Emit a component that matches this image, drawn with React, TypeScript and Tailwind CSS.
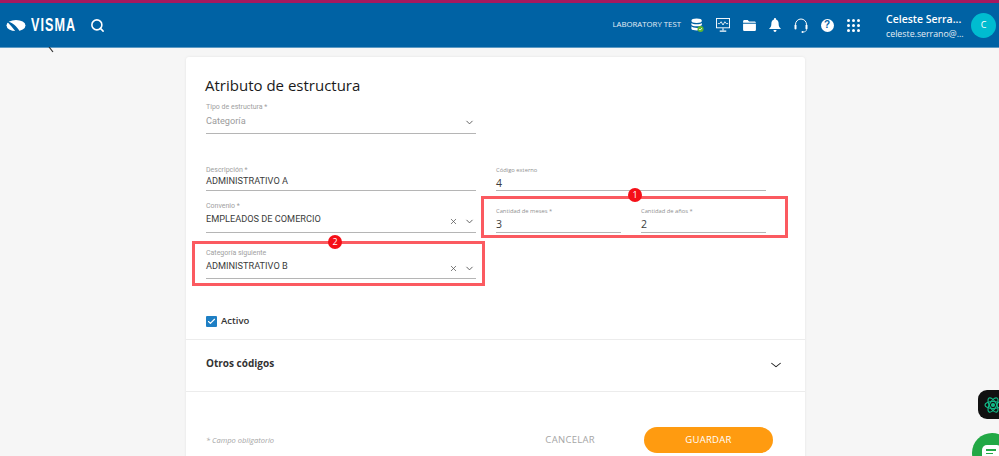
import { Check, ChevronDown, Search, X } from "lucide-react";

function Field({
  label,
  value,
  muted,
  clear,
  arrow,
  alt,
  className = "",
}: {
  label: string;
  value: string;
  muted?: boolean;
  clear?: boolean;
  arrow?: boolean;
  alt?: boolean;
  className?: string;
}) {
  return (
    <div className={`flex flex-col ${className}`}>
      <span className={alt ? "font-['Open_Sans',sans-serif] text-[5.800px] leading-[10px] text-[#8f8f8f]" : "font-['Roboto',sans-serif] text-[7px] leading-[10px] text-[#a0a0a0]"}>{label}</span>
      <div className={`flex min-h-0 flex-1 items-center justify-between ${clear ? "pb-[5px]" : alt ? "pb-0" : "pb-[3px]"}`}>
        <span className={`leading-[12px] ${alt ? "font-['Open_Sans',sans-serif] text-[10.500px]" : "font-['Roboto',sans-serif] text-[9.200px]"} ${muted ? "text-[#9c9c9c]" : "text-[#3c3c3c]"}`}>{value}</span>
        <span className={`flex items-center gap-[6px] pr-[1px] text-[#555] ${clear ? "mt-[5px]" : "mt-[3px]"}`}>
          {clear && <X size={9} strokeWidth={2} />}
          {arrow && <ChevronDown size={11} strokeWidth={2} />}
        </span>
      </div>
      <div className="h-px shrink-0 bg-[#b5b5b5]" />
    </div>
  );
}

function VismaLogo() {
  return (
    <div className="flex items-center gap-[5px]">
      <svg width="20" height="13" viewBox="0 0 20 13">
        <ellipse cx="10" cy="6.500" rx="9.500" ry="5.500" fill="#fff" />
        <path d="M1 2.500 C6 3 11 7 14 13 L10 13 C7 9 4 6 1 2.500Z" fill="#0062a4" />
      </svg>
      <span className="w-[45px] origin-left scale-x-[0.7] font-['Liberation_Sans',sans-serif] text-[18px] leading-none font-bold tracking-[1.5px] whitespace-nowrap text-white">VISMA</span>
    </div>
  );
}

function IconCell({ children }: { children: React.ReactNode }) {
  return <div className="flex w-[26px] items-center justify-center">{children}</div>;
}

function HeaderIcons() {
  return (
    <div className="flex items-center text-white">
      <IconCell>
        {/* base de datos */}
        <svg width="13" height="15" viewBox="0 0 15 17">
          <ellipse cx="6.500" cy="3" rx="6" ry="2.500" fill="#fff" />
          <path d="M.5 5.500c1 2 11 2 12 0V8c-1 2-11 2-12 0zM.5 9.500c1 2 8 2 9 1.500-.5 1-.5 2-.3 3-3 .5-8 0-8.700-1.500z" fill="#fff" />
          <circle cx="11" cy="12.500" r="3.500" fill="#5cb531" />
          <path d="M9.300 12.500l1.300 1.300 2-2.300" stroke="#fff" strokeWidth="1" fill="none" />
        </svg>
      </IconCell>
      <IconCell>
        {/* monitor */}
        <svg width="14" height="14" viewBox="0 0 15 15" fill="none">
          <rect x=".5" y=".5" width="14" height="10" stroke="#fff" />
          <path d="M2 6h2l1.500-2 2 3.500L9.500 4l1.500 2h2" stroke="#fff" strokeWidth=".9" />
          <path d="M7.500 11v2M4 14h7" stroke="#fff" strokeWidth="1.200" />
        </svg>
      </IconCell>
      <IconCell>
        {/* carpeta */}
        <svg width="13" height="11" viewBox="0 0 14 12">
          <path d="M1.500 0H5l1.500 1.500h6c.8 0 1.500.7 1.500 1.500H0v-1.500C0 .7.700 0 1.500 0zM0 4h14v6.500c0 .8-.7 1.500-1.500 1.500h-11C.7 12 0 11.300 0 10.500z" fill="#fff" />
        </svg>
      </IconCell>
      <IconCell>
        {/* campana */}
        <svg width="12" height="14" viewBox="0 0 12 14">
          <path d="M6 0c.5 0 1 .4 1 1v.6c1.700.5 2.600 2 2.600 3.700 0 3 .8 4.200 2.400 5.700H0c1.600-1.500 2.400-2.700 2.400-5.700C2.400 3.600 3.300 2.100 5 1.600V1c0-.6.500-1 1-1zM4.500 12h3c0 1-.7 2-1.500 2s-1.500-1-1.500-2z" fill="#fff" />
        </svg>
      </IconCell>
      <IconCell>
        {/* soporte */}
        <svg width="14" height="15" viewBox="0 0 14 15" fill="none">
          <path d="M1.500 8V6.500a5.500 5.500 0 0 1 11 0V8" stroke="#fff" strokeWidth="1" />
          <rect x="0.500" y="6.500" width="2" height="5" rx="1" fill="#fff" />
          <rect x="11.500" y="6.500" width="2" height="5" rx="1" fill="#fff" />
          <path d="M12.500 11.500c0 1.500-1.500 2.500-3.500 2.500" stroke="#fff" strokeWidth=".8" />
          <circle cx="8.500" cy="14" r="1" fill="#fff" />
        </svg>
      </IconCell>
      <IconCell>
        {/* ayuda */}
        <div className="flex h-[13px] w-[13px] items-center justify-center rounded-full bg-white font-['Liberation_Sans',sans-serif] text-[10px] leading-none font-bold text-[#0062a4]">?</div>
      </IconCell>
      <IconCell>
        {/* apps */}
        <div className="grid grid-cols-3 gap-[2px]">
          {Array.from({ length: 9 }).map((_, i) => (
            <span key={i} className="h-[3px] w-[3px] rounded-full bg-white" />
          ))}
        </div>
      </IconCell>
    </div>
  );
}

export default function App() {
  return (
    <div className="relative h-[456px] w-[999px] overflow-hidden bg-[#f6f6f6] font-['Open_Sans',sans-serif]">
      <header className="flex h-[48px] items-center border-t-[3px] border-b border-t-[#a6195f] border-b-[#5c9ac4] bg-[#0062a4] pr-[3px] pl-[6px]">
        <VismaLogo />
        <Search size={15} strokeWidth={2.500} className="ml-[14px] text-white" />
        <span className="ml-auto text-[7.800px] text-[#e6eef5]">LABORATORY TEST</span>
        <div className="ml-[3px]"><HeaderIcons /></div>
        <div className="mt-[2px] ml-[20px] flex w-[75px] flex-col text-white">
          <span className="text-[10.500px] leading-[15px] font-semibold whitespace-nowrap">Celeste Serra...</span>
          <span className="text-[8.800px] leading-[14px] whitespace-nowrap text-[#e6eef5]">celeste.serrano@...</span>
        </div>
        <div className="ml-[10px] flex h-[25px] w-[25px] items-center justify-center rounded-full bg-[#00bcd0] text-[9px] text-white">C</div>
      </header>

      <main className="mt-[9px] ml-[186px] w-[619px] rounded-t-[3px] bg-white pb-[10px] shadow-[0_0_3px_rgba(0,0,0,0.08)]">
        <div className="pt-[16px] pr-[39px] pl-[20px]">
          <h1 className="-ml-px text-[15px] leading-[24px] text-[#1a1a1a]">Atributo de estructura</h1>
          <Field className="mt-[5px] h-[32px] w-[270px]" label="Tipo de estructura *" value="Categoría" muted arrow />
          <div className="mt-[31px] grid grid-cols-[270px_270px] gap-x-[20px]">
            <Field className="h-[26px]" label="Descripción *" value="ADMINISTRATIVO A" />
            <Field className="h-[26px]" label="Código externo" value="4" alt />
            <Field className="mt-[10px] h-[32px]" label="Convenio *" value="EMPLEADOS DE COMERCIO" clear arrow />
            <div className="mt-[10px] grid grid-cols-[125px_125px] items-end gap-x-[20px]">
              <Field className="h-[27px]" label="Cantidad de meses *" value="3" alt />
              <Field className="h-[27px]" label="Cantidad de años *" value="2" alt />
            </div>
            <Field className="mt-[15px] h-[31px]" label="Categoría siguiente" value="ADMINISTRATIVO B" clear arrow />
          </div>
          <div className="mt-[35px] flex items-center gap-[4px]">
            <span className="flex h-[11px] w-[11px] items-center justify-center rounded-[1px] bg-[#1e7fc4]">
              <Check size={9} strokeWidth={3} className="text-white" />
            </span>
            <span className="text-[9.500px] font-semibold text-[#333]">Activo</span>
          </div>
        </div>
        <div className="mt-[11px] flex h-[53px] items-center justify-between border-y border-[#ececec] pr-[22px] pb-[4px] pl-[20px]">
          <span className="text-[10px] font-bold text-[#333]">Otros códigos</span>
          <ChevronDown size={14} strokeWidth={1.500} className="mt-[3px] scale-x-125 text-[#222]" />
        </div>
        <div className="mt-[35px] flex items-center pr-[32px] pl-[20px]">
          <span className="text-[7.500px] text-[#a5a5a5] italic">* Campo obligatorio</span>
          <span className="ml-auto text-[9.500px] tracking-[0.3px] text-[#a5a5a5]">CANCELAR</span>
          <button className="ml-[49px] h-[26px] w-[129px] rounded-full bg-[#ff9b10] text-[9.500px] tracking-[0.3px] text-white">GUARDAR</button>
        </div>
      </main>

      {/* anotaciones */}
      <div className="absolute top-[196px] left-[481px] h-[42px] w-[307px] border-[3px] border-[#fb5a60]" />
      <div className="absolute top-[241px] left-[192px] h-[45px] w-[293px] border-[3px] border-[#fb5a60]" />
      <span className="absolute top-[188px] left-[628px] flex h-[14px] w-[14px] items-center justify-center rounded-full bg-[#f50f17] text-[9px] text-white">1</span>
      <span className="absolute top-[235px] left-[328px] flex h-[14px] w-[14px] items-center justify-center rounded-full bg-[#f50f17] text-[9px] text-white">2</span>

      {/* flecha cortada */}
      <svg width="6" height="6" viewBox="0 0 6 6" className="absolute top-[47px] left-[48px]">
        <path d="M1 0l4 5" stroke="#333" strokeWidth="1.200" />
      </svg>

      {/* widgets */}
      <div className="absolute top-[390px] left-[978px] flex h-[29px] w-[30px] items-center rounded-l-[9px] bg-[#111] pl-[6px]">
        <svg width="18" height="20" viewBox="0 0 18 20" fill="none" stroke="#12b886" strokeWidth="1.200">
          <ellipse cx="9" cy="10" rx="8" ry="3.500" transform="rotate(60 9 10)" />
          <ellipse cx="9" cy="10" rx="8" ry="3.500" transform="rotate(-60 9 10)" />
          <ellipse cx="9" cy="10" rx="8" ry="3.500" />
          <circle cx="9" cy="10" r="1.500" fill="#12b886" />
        </svg>
      </div>
      <div className="absolute top-[433px] left-[972px] h-[40px] w-[40px] rounded-full bg-[#22a845] pt-[12px] pl-[10px]">
        <div className="flex h-[20px] w-[20px] flex-col gap-[2px] rounded-[5px] bg-white px-[4px] pt-[4px]">
          <span className="h-[1.500px] w-[10px] bg-[#22a845]" />
          <span className="h-[1.500px] w-[7px] bg-[#22a845]" />
        </div>
      </div>
    </div>
  );
}
